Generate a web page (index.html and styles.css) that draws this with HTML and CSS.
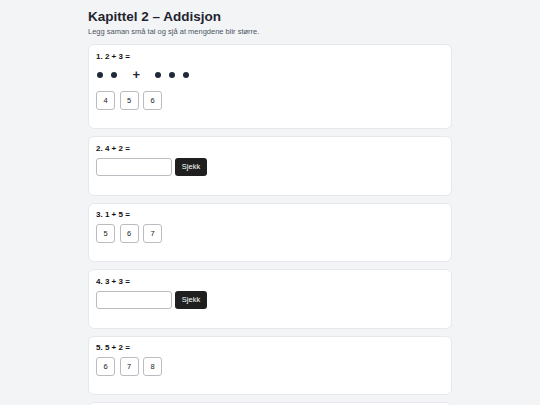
FILE: index.html
```html
<!DOCTYPE html>
<html lang="nn">
<head>
  <meta charset="UTF-8">
  <title>Kapittel 2 – Addisjon</title>
  <link rel="stylesheet" href="styles.css">
</head>
<body>
<div class="page">
  <h1 class="title">Kapittel 2 – Addisjon</h1>
  <p class="intro">Legg saman små tal og sjå at mengdene blir større.</p>

  <div class="task">
    <div class="question">1. 2 + 3 =</div>
    <div class="dots">
      <span class="group"><i class="dot"></i><i class="dot"></i></span>
      <span class="plus">+</span>
      <span class="group"><i class="dot"></i><i class="dot"></i><i class="dot"></i></span>
    </div>
    <div class="choices">
      <button class="choice">4</button>
      <button class="choice">5</button>
      <button class="choice">6</button>
    </div>
    <div class="feedback"></div>
  </div>

  <div class="task">
    <div class="question">2. 4 + 2 =</div>
    <div class="answer">
      <input type="text" class="field">
      <button class="check">Sjekk</button>
    </div>
    <div class="feedback"></div>
  </div>

  <div class="task">
    <div class="question">3. 1 + 5 =</div>
    <div class="choices">
      <button class="choice">5</button>
      <button class="choice">6</button>
      <button class="choice">7</button>
    </div>
    <div class="feedback"></div>
  </div>

  <div class="task">
    <div class="question">4. 3 + 3 =</div>
    <div class="answer">
      <input type="text" class="field">
      <button class="check">Sjekk</button>
    </div>
    <div class="feedback"></div>
  </div>

  <div class="task">
    <div class="question">5. 5 + 2 =</div>
    <div class="choices">
      <button class="choice">6</button>
      <button class="choice">7</button>
      <button class="choice">8</button>
    </div>
    <div class="feedback"></div>
  </div>

  <div class="task">
    <div class="question">6. 2 + 2 =</div>
    <div class="answer">
      <input type="text" class="field">
      <button class="check">Sjekk</button>
    </div>
    <div class="feedback"></div>
  </div>
</div>
</body>
</html>
```

FILE: styles.css
```css
*{margin: 0;padding: 0;box-sizing: border-box;}
body{
  background: #f3f4f6;
  font-family: "Liberation Sans", Arial, sans-serif;
  color: #1f2937;
}
.page{
  width: 364px;
  margin: 0 auto;
  padding-top: 9px;
}

/* 标题 */
.title{
  font-size: 13.5px;
  font-weight: bold;
  line-height: 16px;
  color: #1f2530;
}
.intro{
  font-size: 7.5px;
  line-height: 10px;
  color: #4b5563;
  margin-top: 1.5px;
  margin-bottom: 7.5px;
}

/* 题目卡片 */
.task{
  background: #fff;
  border: 1px solid #e7e8eb;
  border-radius: 6px;
  padding: 6.5px 7px 7px;
  margin-bottom: 7px;
}
.question{
  font-size: 8px;
  font-weight: bold;
  line-height: 10px;
  margin-bottom: 4px;
  color: #111;
}

/* 点阵 */
.dots{
  display: flex;
  align-items: center;
  height: 18px;
  padding-left: 0.5px;
  margin: 2px 0 7.5px;
}
.group{
  display: flex;
  gap: 8px;
}
.dot{
  display: block;
  width: 6px;
  height: 6px;
  border-radius: 50%;
  background: #1f2937;
}
.plus{
  font-size: 13px;
  font-weight: bold;
  width: 7px;
  text-align: center;
  margin: 0 15.5px 0 16px;
  line-height: 1;
  color: #1f2937;
}

/* 选项按钮 */
.choices{
  display: flex;
  gap: 4.5px;
}
.choice{
  width: 19px;
  height: 18.5px;
  background: #fff;
  border: 1px solid #b9bcc1;
  border-radius: 3px;
  font-family: inherit;
  font-size: 7.5px;
  color: #222;
}

/* 输入框 */
.answer{
  display: flex;
  gap: 3.5px;
}
.field{
  width: 75.5px;
  height: 18.5px;
  border: 1px solid #b9bcc1;
  border-radius: 3px;
  background: #fff;
}
.check{
  width: 32px;
  height: 18px;
  background: #1f1f1f;
  color: #fff;
  border: none;
  border-radius: 3px;
  font-family: inherit;
  font-size: 7.5px;
}

.feedback{
  min-height: 11.5px;
}
```
